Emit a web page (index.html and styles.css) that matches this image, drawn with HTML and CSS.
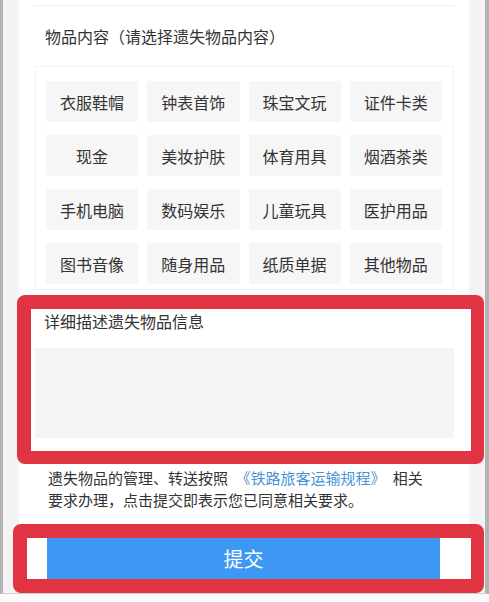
FILE: index.html
```html
<!DOCTYPE html>
<html lang="zh-CN">
<head>
    <meta charset="UTF-8">
    <meta name="viewport" content="width=device-width, initial-scale=1" />
    <title>遗失物品登记</title>
    <link rel="stylesheet" href="styles.css">
</head>
<body>
    <div id="frame">
        <div id="panel">
            <div class="sep"></div>
            <div class="section-title">物品内容（请选择遗失物品内容）</div>
            <div id="tag-box">
                <div class="tag">衣服鞋帽</div>
                <div class="tag">钟表首饰</div>
                <div class="tag">珠宝文玩</div>
                <div class="tag">证件卡类</div>
                <div class="tag">现金</div>
                <div class="tag">美妆护肤</div>
                <div class="tag">体育用具</div>
                <div class="tag">烟酒茶类</div>
                <div class="tag">手机电脑</div>
                <div class="tag">数码娱乐</div>
                <div class="tag">儿童玩具</div>
                <div class="tag">医护用品</div>
                <div class="tag">图书音像</div>
                <div class="tag">随身用品</div>
                <div class="tag">纸质单据</div>
                <div class="tag">其他物品</div>
            </div>

            <div class="mark mark-desc">
                <div class="desc-label">详细描述遗失物品信息</div>
                <textarea id="desc"></textarea>
            </div>

            <div class="note">遗失物品的管理、转送按照 <a class="rule-link" href="#">《铁路旅客运输规程》</a> 相关<br>要求办理，点击提交即表示您已同意相关要求。</div>

            <div class="mark mark-submit">
                <div id="submit">提交</div>
            </div>
        </div>
    </div>
</body>
</html>
```

FILE: styles.css
```css
html {
    height: 100%;
}
body {
    margin: 0;
    padding: 0;
    background-color: #fafafa;
    font-family: "Noto Sans CJK SC", "Noto Sans", sans-serif;
    color: #333;
}
#frame {
    box-sizing: border-box;
    height: 594px;
    padding: 0 16px;
    background-color: #f3f3f3;
    border-left: 3px solid #b3b3b3;
    border-right: 4px solid #b3b3b3;
    border-bottom: 1px solid #d0d0d0;
}
#panel {
    height: 100%;
    background-color: white;
    display: flex;
    flex-direction: column;
}
.sep {
    height: 7px;
    margin: 0 14px;
    border-bottom: 1px solid #efefef;
}
.section-title {
    margin-top: 18px;
    padding-left: 26px;
    font-size: 16px;
    line-height: 24px;
}
#tag-box {
    margin: 18px 15px 0 16px;
    padding: 14px 11px 5px 10px;
    border: 1px solid #f2f2f2;
    display: grid;
    grid-template-columns: repeat(4, 1fr);
    gap: 13px 9px;
}
.tag {
    height: 41px;
    display: flex;
    align-items: center;
    justify-content: center;
    background-color: #f6f6f6;
    border-radius: 2px;
    font-size: 16px;
}
.mark {
    border: 14px solid #e13443;
    border-right-width: 13px;
    border-radius: 8px;
    background-color: white;
}
.mark-desc {
    margin: 5px -15px 0 -2px;
    border-bottom-width: 13px;
    padding: 0 17px 13px 4px;
    display: flex;
    flex-direction: column;
}
.desc-label {
    padding-left: 9px;
    font-size: 16px;
    line-height: 24px;
}
#desc {
    margin-top: 15px;
    height: 90px;
    box-sizing: border-box;
    border: none;
    outline: none;
    resize: none;
    background-color: #f5f5f5;
}
.note {
    margin-top: 3px;
    padding: 0 30px 0 29px;
    font-size: 15px;
    line-height: 22px;
    word-spacing: 4px;
}
.rule-link {
    color: #4b93d6;
    text-decoration: none;
}
.mark-submit {
    margin: 13px -15px 0 -6px;
    padding: 0 31px 0 20px;
}
#submit {
    height: 41px;
    display: flex;
    align-items: center;
    justify-content: center;
    background-color: #3d98f4;
    color: white;
    font-size: 20px;
    cursor: pointer;
}
```
